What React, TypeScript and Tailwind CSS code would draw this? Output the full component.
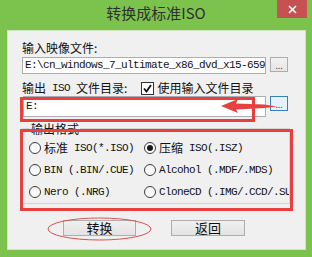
import React from 'react';

const cn = "font-['Noto_Sans_CJK_SC',sans-serif] text-[12px]";
const mono = "font-['Liberation_Mono','Noto_Sans_CJK_SC',monospace] text-[11px] tracking-[-0.6px]";

const DotsButton: React.FC<{ active?: boolean }> = ({ active }) => (
  <div
    className={`ml-[4px] w-[18px] h-[15px] border flex items-end justify-center pb-[1px] overflow-hidden text-[9px] leading-[9px] text-[#333] ${
      active ? 'border-[#3c7fb1] bg-[#e5f1fb]' : 'border-[#acacac] bg-gradient-to-b from-[#f2f2f2] to-[#e5e5e5]'
    }`}
  >
    ...
  </div>
);

const Radio: React.FC<{ checked?: boolean; cnLabel?: string; label: string }> = ({ checked, cnLabel, label }) => (
  <div className="flex items-center h-[20px] overflow-hidden">
    <div className="w-[12px] h-[12px] rounded-full border border-[#3d3d3d] bg-gradient-to-b from-[#f4f4f4] to-[#ffffff] flex items-center justify-center shrink-0">
      {checked && <div className="w-[6px] h-[6px] rounded-full bg-[#1a1a1a]" />}
    </div>
    <div className="ml-[3px] flex items-center whitespace-nowrap">
      {cnLabel && <span className={`${cn} mr-[6px]`}>{cnLabel}</span>}
      <span className={mono}>{label}</span>
    </div>
  </div>
);

const PushButton: React.FC<{ label: string; className?: string }> = ({ label, className }) => (
  <div
    className={`w-[73px] h-[16px] border border-[#adadad] bg-gradient-to-b from-[#f0f0f0] to-[#e3e3e3] flex items-center justify-center ${cn} text-[13px] text-[#111] ${className ?? ''}`}
  >
    {label}
  </div>
);

export default function App() {
  return (
    <div className="relative w-[312px] h-[257px] bg-[#7cc34e] flex flex-col overflow-hidden text-[#111]">
      {/* Title bar */}
      <div className="h-[30px] flex items-center justify-center pb-[3px] font-['Noto_Sans_CJK_SC',sans-serif] text-[15px] text-[#2f2f2f]">
        转换成标准ISO
      </div>
      <div className="absolute top-0 left-[277px] w-[30px] h-[18px] bg-[#c75050] flex items-center justify-center">
        <svg width="9" height="9" viewBox="0 0 9 9">
          <path d="M1 1 L8 8 M8 1 L1 8" stroke="#fff" strokeWidth="1.6" />
        </svg>
      </div>

      {/* Dialog body */}
      <div className="ml-[7px] mr-[6px] h-[220px] bg-[#f0f0f0] border border-[#cfe3c0] pl-[14px] pt-[9px]">
        <div className={`${cn} h-[16px] leading-[16px]`}>输入映像文件:</div>
        <div className="mt-[1px] flex items-start">
          <div className="w-[244px] h-[17px] bg-white border border-[#abadb3] pl-[2px] flex items-center overflow-hidden whitespace-nowrap">
            <span className={mono}>E:\cn_windows_7_ultimate_x86_dvd_x15-659</span>
          </div>
          <DotsButton />
        </div>

        <div className="mt-[6px] h-[16px] flex items-center whitespace-nowrap">
          <span className={cn}>输出</span>
          <span className={`${mono} ml-[6px]`}>ISO</span>
          <span className={`${cn} ml-[6px]`}>文件目录:</span>
          <div className="ml-[14px] w-[13px] h-[13px] border border-[#333] bg-white flex items-center justify-center">
            <svg width="11" height="11" viewBox="0 0 11 11">
              <path d="M2 5.5 L4.5 8.5 L9 2" stroke="#111" strokeWidth="1.8" fill="none" />
            </svg>
          </div>
          <span className={`${cn} ml-[3px]`}>使用输入文件目录</span>
        </div>

        <div className="flex items-start">
          <div className="ml-[1px] w-[243px] h-[21px] bg-white border border-[#abadb3] pl-[2px] flex items-center">
            <span className={mono}>E:</span>
          </div>
          <DotsButton active />
        </div>

        {/* Output format group */}
        <div className="mt-[5px] pt-[6px] w-[268px] relative">
          <div className="border border-[#d5d5d5] h-[76px] pl-[6px] pt-[9px] grid grid-cols-[115px_1fr] gap-y-[1px] overflow-hidden">
            <Radio cnLabel="标准" label="ISO(*.ISO)" />
            <Radio checked cnLabel="压缩" label="ISO(.ISZ)" />
            <Radio label="BIN (.BIN/.CUE)" />
            <Radio label="Alcohol (.MDF/.MDS)" />
            <Radio label="Nero (.NRG)" />
            <Radio label="CloneCD (.IMG/.CCD/.SUB)" />
          </div>
          <span className={`${cn} absolute top-0 left-[8px] px-[1px] bg-[#f0f0f0] leading-[13px]`}>输出格式</span>
        </div>

        <div className="mt-[16px] flex">
          <PushButton label="转换" className="ml-[41px]" />
          <PushButton label="返回" className="ml-[35px] w-[74px]" />
        </div>
      </div>
      <div className="flex-1" />

      {/* Annotations */}
      <div className="absolute left-[20px] top-[97px] w-[235px] h-[25px] border-[3px] border-[#e8403f]" />
      <div className="absolute left-[20px] top-[129px] w-[273px] h-[82px] border-[3px] border-[#e8403f]" />
      <svg className="absolute left-0 top-0" width="312" height="257" viewBox="0 0 312 257">
        <polygon
          points="221,106 238,99 236,103.5 264,104.5 277,106.5 264,108 236,109.5 238,113"
          fill="#e8403f"
        />
        <ellipse cx="99.5" cy="229" rx="51.5" ry="11" fill="none" stroke="#d9534f" strokeWidth="1" />
      </svg>
    </div>
  );
}
